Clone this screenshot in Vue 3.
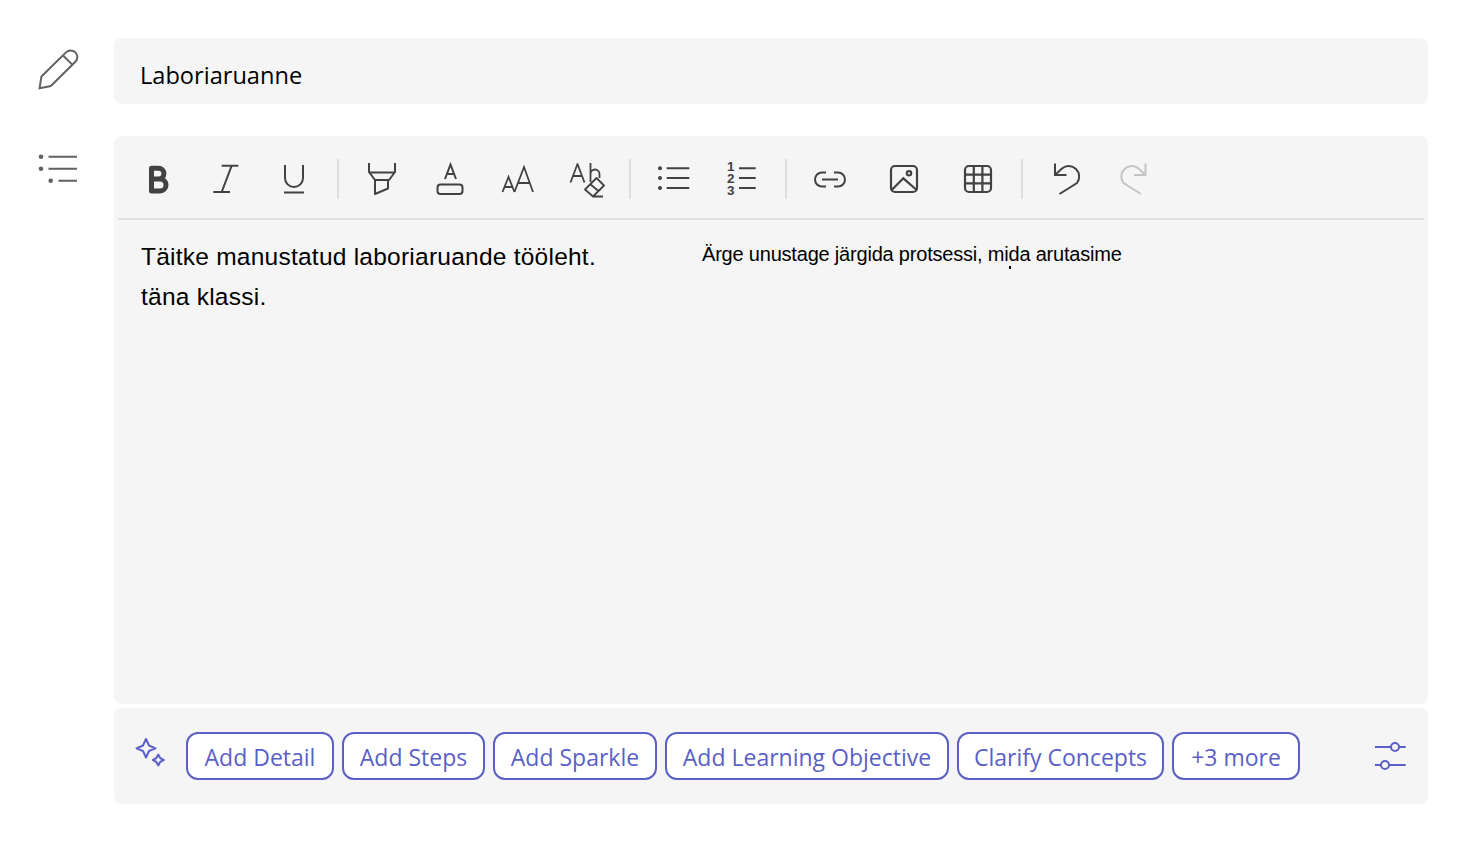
<script setup>
// widths come from the chip labels as laid out in the design
const chips = [
  { label: 'Add Detail', width: 148 },
  { label: 'Add Steps', width: 143 },
  { label: 'Add Sparkle', width: 164 },
  { label: 'Add Learning Objective', width: 284 },
  { label: 'Clarify Concepts', width: 207 },
  { label: '+3 more', width: 128 }
]
</script>

<template>
  <div class="page">
    <div class="side-icon">
      <svg width="44" height="44" viewBox="36 48 44 44" fill="none" stroke="#616161" stroke-width="2">
        <path d="M39.6 88.2 L41.2 77.6 Q41.4 76.6 42.2 75.8 L66 52.4 A6.6 6.6 0 0 1 75.4 61.8 L51.6 85.2 Q50.8 86 49.8 86.2 Z" />
        <path d="M63.3 55.8 L72 64.4" />
      </svg>
    </div>
    <div class="title-box">Laboriaruanne</div>

    <div class="side-icon">
      <svg width="44" height="44" viewBox="36 146 44 44" fill="none" stroke="#616161" stroke-width="2">
        <path d="M48.5 156.7 H77 M48.5 168.7 H77 M58.5 180.7 H77" />
        <g fill="#616161" stroke="none">
          <circle cx="41" cy="156.7" r="2.3" />
          <circle cx="41" cy="168.7" r="2.3" />
          <circle cx="50.7" cy="180.7" r="2.3" />
        </g>
      </svg>
    </div>

    <div class="main">
      <div class="editor">
        <div class="toolbar">
          <button class="tool">
            <svg width="40" height="40" viewBox="138 159 40 40" fill="none" stroke="#424242" stroke-width="5" stroke-linejoin="round">
              <path d="M151.5 179 V168.2 H158.5 A5.4 5.4 0 0 1 158.5 179 H151.5 V191 H160 A6 6 0 0 0 160 179 H151.5" />
            </svg>
          </button>
          <button class="tool">
            <svg width="40" height="40" viewBox="206 159 40 40" fill="none" stroke="#424242" stroke-width="2">
              <path d="M221.7 165.7 H238.3 M213.3 192 H230 M231.7 165.7 L221.7 192" />
            </svg>
          </button>
          <button class="tool">
            <svg width="40" height="40" viewBox="274 159 40 40" fill="none" stroke="#424242" stroke-width="2">
              <path d="M285 165 V178 A9 9 0 0 0 303 178 V165 M284 192.5 H304" />
            </svg>
          </button>
          <span class="sep"></span>
          <button class="tool">
            <svg width="40" height="40" viewBox="362 159 40 40" fill="none" stroke="#424242" stroke-width="2" stroke-linejoin="round">
              <path d="M369 163 V172 L375 180 H389 L395 172 V163 M369 172.5 H395 M375 180 V194 L388 188.5 V180" />
            </svg>
          </button>
          <button class="tool">
            <svg width="40" height="40" viewBox="430 159 40 40" fill="none" stroke="#424242" stroke-width="2">
              <path d="M445 179 L450.5 164.5 L456 179 M447 174 H454" />
              <rect x="437.5" y="184.5" width="25" height="9.5" rx="3" />
            </svg>
          </button>
          <button class="tool">
            <svg width="40" height="40" viewBox="498 159 40 40" fill="none" stroke="#424242" stroke-width="1.8">
              <path d="M502.5 192 L508.5 177 L514.5 192 M504.5 187 H512.5" />
              <path d="M514.5 192 L524 167 L533 192 M518 183 H530" />
            </svg>
          </button>
          <button class="tool">
            <svg width="40" height="40" viewBox="566 159 40 40" fill="none" stroke="#424242" stroke-width="1.8" stroke-linejoin="round">
              <path d="M570.5 182.5 L577.5 164 L584.5 182.5 M573 176 H582" />
              <path d="M590.5 163 V182 M590.5 174 A4.5 4.5 0 0 1 599.5 174 V178" />
              <path d="M585 189.5 L596.5 178 L604 185.5 L593 196.5 Z M590 184 L598.5 191 M593 196.5 H603" />
            </svg>
          </button>
          <span class="sep"></span>
          <button class="tool">
            <svg width="40" height="40" viewBox="654 159 40 40" fill="none" stroke="#424242" stroke-width="2">
              <path d="M666.7 168.3 H689.3 M666.7 178 H689.3 M666.7 188 H689.3" />
              <g fill="#424242" stroke="none">
                <circle cx="660" cy="168.3" r="2" />
                <circle cx="660" cy="178" r="2" />
                <circle cx="660" cy="188" r="2" />
              </g>
            </svg>
          </button>
          <button class="tool">
            <svg width="40" height="40" viewBox="722 159 40 40" fill="none" stroke="#424242" stroke-width="2">
              <path d="M739 168.3 H755.7 M739 178 H755.7 M739 188 H755.7" />
              <g class="digits" fill="#424242" stroke="none">
                <text x="727" y="170.9">1</text>
                <text x="727" y="183">2</text>
                <text x="727" y="195.2">3</text>
              </g>
            </svg>
          </button>
          <span class="sep"></span>
          <button class="tool">
            <svg width="40" height="40" viewBox="810 159 40 40" fill="none" stroke="#424242" stroke-width="2">
              <path d="M826 172.5 H822 A7 7 0 0 0 822 186.5 H826 M834 172.5 H838 A7 7 0 0 1 838 186.5 H834 M822 179.5 H838" />
            </svg>
          </button>
          <button class="tool wide">
            <svg width="40" height="40" viewBox="884 159 40 40" fill="none" stroke="#424242" stroke-width="2.2">
              <rect x="891" y="166" width="26" height="26" rx="4" />
              <path d="M891.7 190 L903.3 178.3 L916.7 190" />
              <circle cx="909" cy="173.3" r="2.2" />
            </svg>
          </button>
          <button class="tool wide">
            <svg width="40" height="40" viewBox="958 159 40 40" fill="none" stroke="#424242" stroke-width="2.2">
              <rect x="965" y="166" width="26" height="26" rx="4" />
              <path d="M973.8 166 V192 M982.4 166 V192 M965 174.7 H991 M965 183.3 H991" />
            </svg>
          </button>
          <span class="sep"></span>
          <button class="tool">
            <svg width="40" height="40" viewBox="1046 159 40 40" fill="none" stroke="#424242" stroke-width="2">
              <path d="M1055 163.5 V175 H1066.5 M1055.5 174.5 L1062 168.5 A10.5 10.5 0 0 1 1077 183 L1059.5 194" />
            </svg>
          </button>
          <button class="tool redo">
            <svg width="40" height="40" viewBox="1112 159 40 40" fill="none" stroke="#c4c4c4" stroke-width="2">
              <path d="M1145.5 163.5 V175 H1134 M1145 174.5 L1138.5 168.5 A10.5 10.5 0 0 0 1123.5 183 L1141 194" />
            </svg>
          </button>
        </div>
        <div class="divider"></div>
        <div class="body">
          <p>Täitke manustatud laboriaruande tööleht.</p>
          <p>täna klassi.</p>
          <span class="overlay">Ärge unustage järgida protsessi, mida arutasime</span>
          <span class="speck"></span>
        </div>
      </div>

      <div class="bar">
        <svg class="sparkle" width="40" height="40" viewBox="130 736 40 40" fill="none" stroke="#5b5fc7" stroke-width="2" stroke-linejoin="round">
          <path d="M146 739 L149 745.5 L155.5 748.3 L149 751 L146 757.5 L143 751 L136.5 748.3 L143 745.5 Z" />
          <path d="M158.3 754.6 L160.2 758.1 L163.7 760 L160.2 761.9 L158.3 765.4 L156.4 761.9 L152.9 760 L156.4 758.1 Z" />
        </svg>
        <div class="chips">
          <button v-for="chip in chips" :key="chip.label" class="chip" :style="{ width: chip.width + 'px' }">{{ chip.label }}</button>
        </div>
        <svg class="sliders" width="40" height="40" viewBox="1370 736 40 40" fill="none" stroke="#5b5fc7" stroke-width="2">
          <path d="M1375 747 H1405.7 M1375 765 H1405.7" />
          <circle cx="1395" cy="747" r="4" fill="#f5f5f5" />
          <circle cx="1385" cy="765" r="4" fill="#f5f5f5" />
        </svg>
      </div>
    </div>
  </div>
</template>

<style>
html, body {
  background: #fff;
  font-family: "Liberation Sans", Arial, sans-serif;
}
</style>

<style scoped>
.page {
  display: grid;
  grid-template-columns: 114px 1fr;
  row-gap: 32px;
  padding: 38px 32px 40px 0;
  box-sizing: border-box;
  height: 844px;
}
.side-icon {
  padding: 10px 0 0 36px;
}
.side-icon svg { display: block; }
.title-box {
  height: 66px;
  box-sizing: border-box;
  background: #f5f5f5;
  border-radius: 8px;
  padding: 20px 0 0 26px;
  font-family: "Open Sans", sans-serif;
  font-size: 23.6px;
  line-height: 34px;
  color: #000;
}
.main {
  display: flex;
  flex-direction: column;
  gap: 4px;
}
.editor {
  height: 568px;
  background: #f5f5f5;
  border-radius: 8px;
  position: relative;
}
.toolbar {
  display: flex;
  height: 82px;
  box-sizing: border-box;
  padding: 23px 0 19px 10px;
}
.tool {
  width: 68px;
  height: 40px;
  padding: 0;
  border: none;
  background: none;
  display: flex;
  justify-content: center;
}
.tool svg { display: block; overflow: visible; }
.tool.wide { margin-left: 6px; }
.tool.redo { margin-left: -2px; }
.sep {
  width: 2px;
  height: 40px;
  margin: 0 9px;
  background: #dedede;
}
.digits {
  font-family: "Liberation Sans", sans-serif;
  font-size: 13.5px;
  font-weight: 700;
}
.divider {
  height: 2px;
  margin: 0 4px;
  background: #dfdfe4;
}
.body {
  padding: 17px 0 0 27px;
  font-size: 24.5px;
  line-height: 40px;
  letter-spacing: 0.24px;
  color: #000;
}
.body p { margin: 0; }
.overlay {
  position: absolute;
  left: 588px;
  top: 104px;
  font-size: 20px;
  line-height: 28px;
  letter-spacing: -0.2px;
  white-space: nowrap;
}
.speck {
  position: absolute;
  left: 895px;
  top: 130px;
  width: 2px;
  height: 3px;
  background: #000;
}
.bar {
  height: 96px;
  box-sizing: border-box;
  background: #f5f5f5;
  border-radius: 8px;
  padding: 0 18px 0 16px;
  display: flex;
  align-items: center;
}
.sparkle { margin-right: 16px; overflow: visible; }
.chips {
  display: flex;
  gap: 8px;
}
.chip {
  height: 48px;
  box-sizing: border-box;
  padding: 2px 0 0;
  border: 2px solid #5b5fc7;
  border-radius: 12px;
  background: #fff;
  color: #5b5fc7;
  font-family: "Open Sans", sans-serif;
  font-size: 23px;
  white-space: nowrap;
}
.sliders { margin-left: auto; overflow: visible; }
</style>
